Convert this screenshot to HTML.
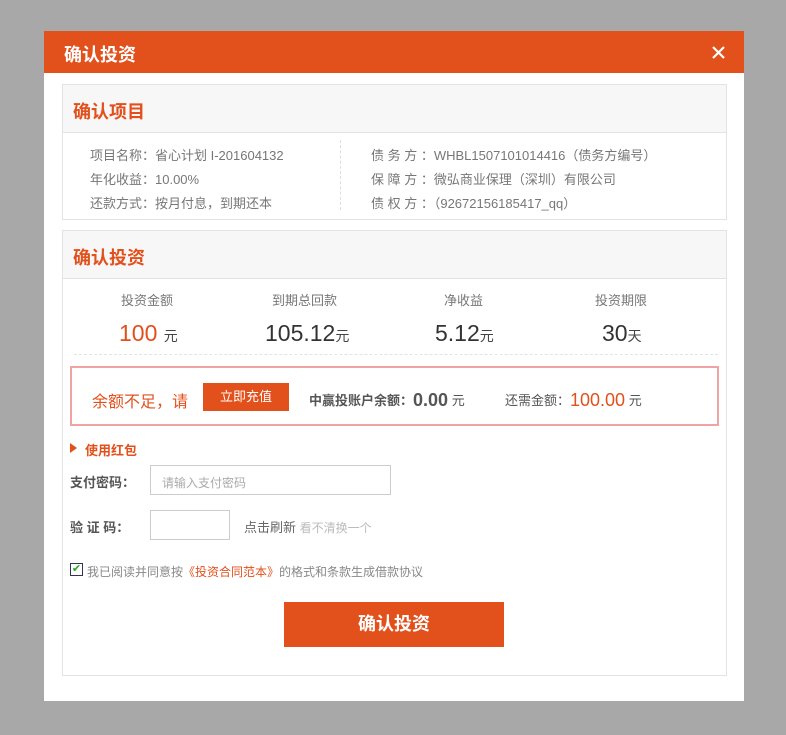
<!DOCTYPE html>
<html><head><meta charset="utf-8"><style>
*{margin:0;padding:0;box-sizing:border-box}
body{width:786px;height:735px;background:#a8a8a8;font-family:"Liberation Sans","Noto Sans CJK SC",sans-serif;position:relative;overflow:hidden;color:#555}
.a{position:absolute;white-space:nowrap}
.dlg{position:absolute;left:44px;top:31px;width:700px;height:670px;background:#fff}
.hd{position:absolute;left:44px;top:31px;width:700px;height:42px;background:#e2501c}
.box{position:absolute;border:1px solid #e3e3e3;background:#fff}
.bh{position:absolute;left:0;top:0;right:0;height:48px;background:#f7f7f7;border-bottom:1px solid #e3e3e3}
.t{font-size:18px;font-weight:bold;color:#e2501c}
.s{font-size:13px;color:#777}
.o{color:#e2501c}
</style></head><body>
<div class="dlg"></div>
<div class="hd"></div>
<div class="a" style="left:64px;top:41px;font-size:18px;font-weight:bold;color:#fff">确认投资</div>
<svg class="a" style="left:712px;top:46px" width="13" height="13" viewBox="0 0 13 13"><path d="M1 1L12 12M12 1L1 12" stroke="#fff" stroke-width="2.2"/></svg>

<div class="box" style="left:62px;top:84px;width:665px;height:136px"><div class="bh"></div></div>
<div class="a t" style="left:73px;top:98px">确认项目</div>
<div class="a" style="left:340px;top:140px;height:70px;border-left:1px dashed #ddd"></div>
<div class="a s" style="left:90px;top:145px">项目名称：省心计划 I-201604132</div>
<div class="a s" style="left:90px;top:169px">年化收益：10.00%</div>
<div class="a s" style="left:90px;top:193px">还款方式：按月付息，到期还本</div>
<div class="a s" style="left:371px;top:145px">债 务 方 ：WHBL1507101014416（债务方编号）</div>
<div class="a s" style="left:371px;top:169px">保 障 方 ：微弘商业保理（深圳）有限公司</div>
<div class="a s" style="left:371px;top:193px">债 权 方 ：（92672156185417_qq）</div>

<div class="box" style="left:62px;top:230px;width:665px;height:446px"><div class="bh"></div></div>
<div class="a t" style="left:73px;top:244px">确认投资</div>
<div class="a s" style="left:121px;top:290px">投资金额</div>
<div class="a s" style="left:272px;top:290px">到期总回款</div>
<div class="a s" style="left:444px;top:290px">净收益</div>
<div class="a s" style="left:595px;top:290px">投资期限</div>
<div class="a" style="left:119px;top:320px;font-size:23px;color:#e2501c">100 <span style="font-size:14px;color:#444">元</span></div>
<div class="a" style="left:265px;top:320px;font-size:23px;color:#333">105.12<span style="font-size:14px;color:#444">元</span></div>
<div class="a" style="left:435px;top:320px;font-size:23px;color:#333">5.12<span style="font-size:14px;color:#444">元</span></div>
<div class="a" style="left:602px;top:320px;font-size:23px;color:#333">30<span style="font-size:14px;color:#444">天</span></div>
<div class="a" style="left:74px;top:354px;width:644px;border-top:1px dashed #e3e3e3"></div>

<div class="a" style="left:70px;top:366px;width:649px;height:60px;border:2px solid #f0a3a3"></div>
<div class="a" style="left:92px;top:388px;font-size:16px;color:#e2501c">余额不足，请</div>
<div class="a" style="left:203px;top:383px;width:86px;height:28px;background:#e2501c;color:#fff;font-size:13px;text-align:center;line-height:28px">立即充值</div>
<div class="a" style="left:309px;top:389px;font-size:13px;color:#555;font-weight:bold">中赢投账户余额：<span style="font-size:18px;position:relative;top:1px">0.00</span> <span style="font-weight:normal">元</span></div>
<div class="a" style="left:505px;top:389px;font-size:13px;color:#555">还需金额：<span style="font-size:18px;color:#e2501c;position:relative;top:1px">100.00</span> 元</div>

<div class="a" style="left:70px;top:443px;width:0;height:0;border-top:5px solid transparent;border-bottom:5px solid transparent;border-left:7px solid #e2501c"></div>
<div class="a" style="left:85px;top:440px;font-size:13px;font-weight:bold;color:#e2501c">使用红包</div>
<div class="a" style="left:70px;top:472px;font-size:13px;color:#555;font-weight:bold">支付密码：</div>
<div class="a" style="left:150px;top:465px;width:241px;height:30px;border:1px solid #ccc;font-size:12px;color:#aaa;padding:8px 0 0 11px">请输入支付密码</div>
<div class="a" style="left:70px;top:517px;font-size:13px;color:#555;font-weight:bold">验 证 码：</div>
<div class="a" style="left:150px;top:510px;width:80px;height:30px;border:1px solid #ccc"></div>
<div class="a" style="left:244px;top:517px;font-size:13px;color:#666">点击刷新 <span style="font-size:12px;color:#bbb">看不清换一个</span></div>

<div class="a" style="left:70px;top:563px;width:13px;height:13px;border:1px solid #335;font-size:11px;line-height:11px;color:#2a2;text-align:center">✔</div>
<div class="a" style="left:87px;top:563px;font-size:12px;color:#888">我已阅读并同意按<span class="o">《投资合同范本》</span>的格式和条款生成借款协议</div>

<div class="a" style="left:284px;top:602px;width:220px;height:45px;background:#e2501c;color:#fff;font-size:18px;font-weight:bold;text-align:center;line-height:45px">确认投资</div>
</body></html>
